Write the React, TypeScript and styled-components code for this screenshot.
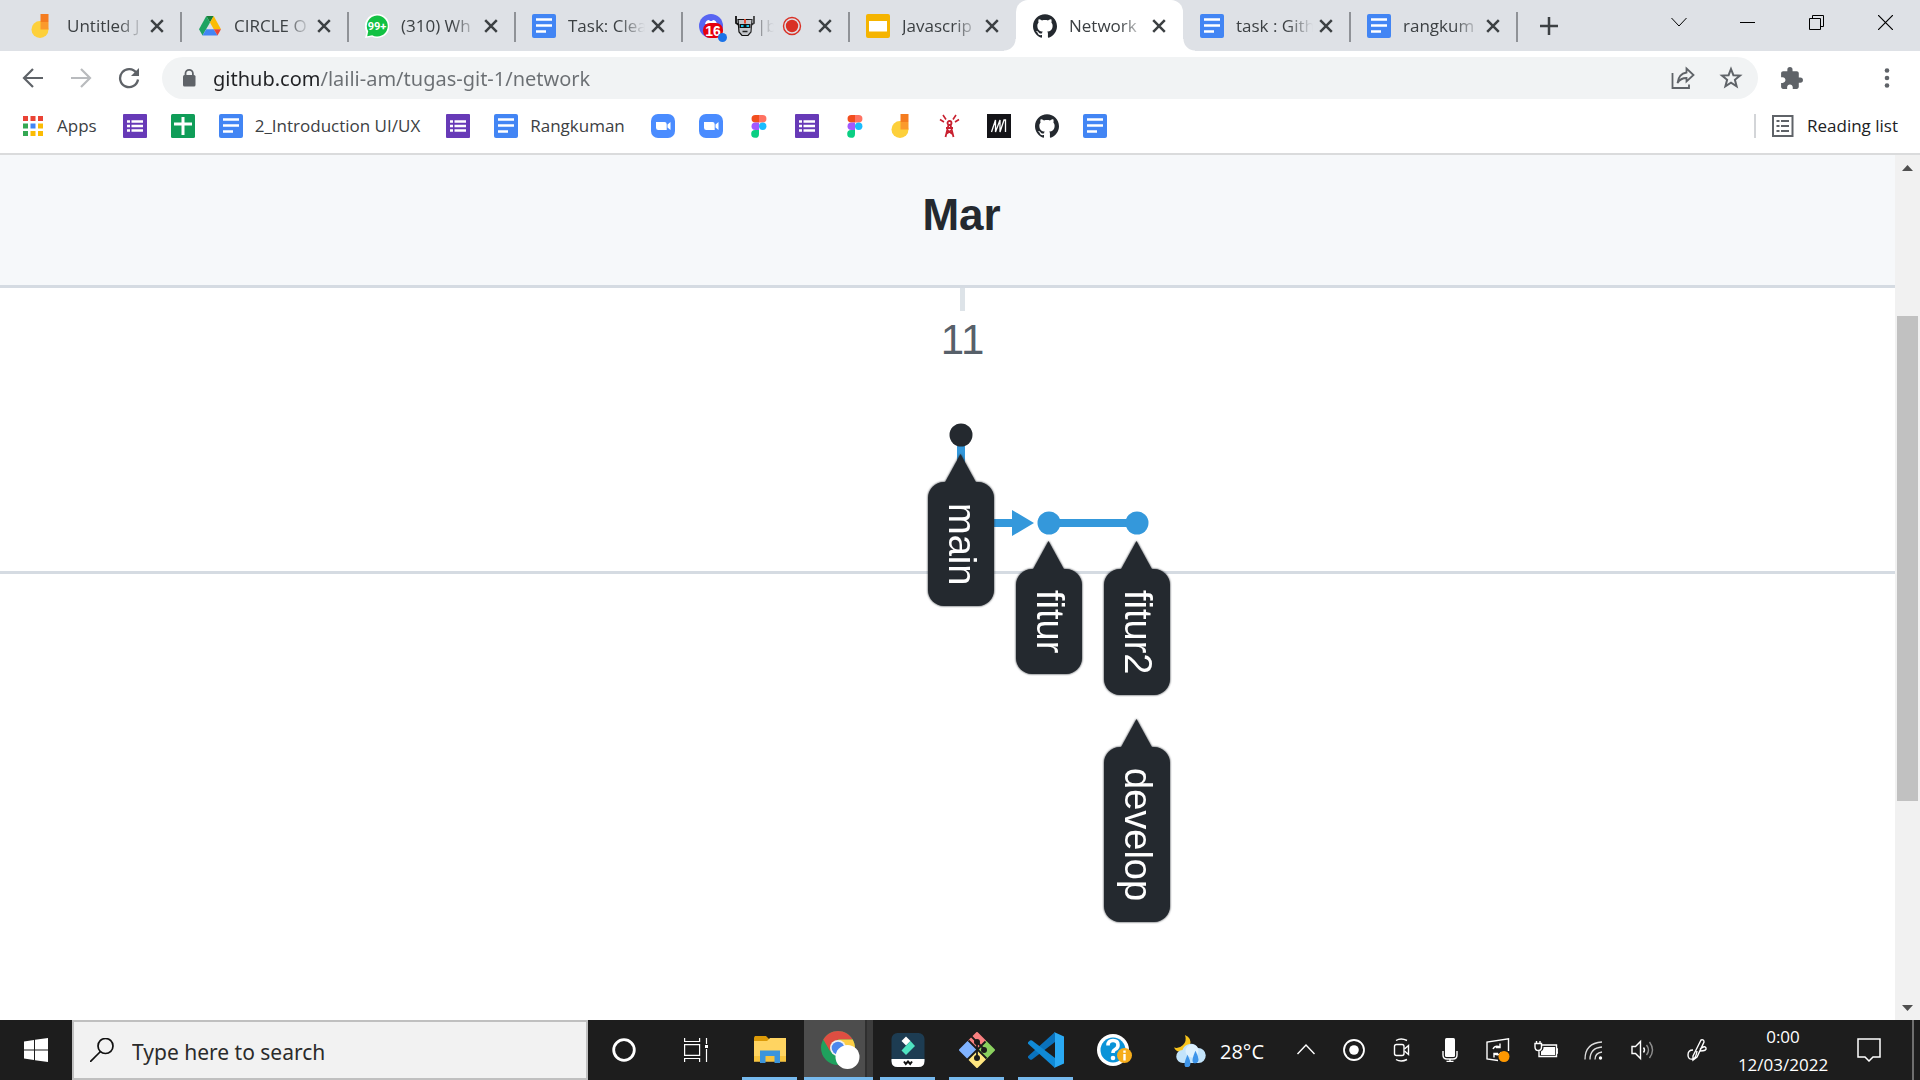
import React from "react";
import styled, { createGlobalStyle, css } from "styled-components";
import { SiGithub } from "react-icons/si";
import { MdExtension } from "react-icons/md";

const Global = createGlobalStyle`
  *, *::before, *::after { box-sizing: border-box; }
  body { margin: 0; background: #fff; font-family: "Open Sans", "Noto Sans", sans-serif; }
  button, input { font: inherit; color: inherit; border: 0; padding: 0; background: none; }
  svg { display: block; flex: none; }
`;

const Screen = styled.div`
  display: flex;
  flex-direction: column;
  height: 100vh;
  overflow: hidden;
`;

/* ---------- Tabs ---------- */

const TabStrip = styled.header`
  display: flex;
  flex: none;
  height: 51px;
  padding-left: 14px;
  background: #dee1e6;
  color: #3c4043;
`;

const Tab = styled.div<{ $active?: boolean; $divider?: boolean }>`
  position: relative;
  display: flex;
  align-items: center;
  flex: 0 1 167px;
  min-width: 0;
  padding: 0 13px 0 17px;
  ${(p) =>
    p.$divider &&
    css`
      &::after {
        content: "";
        position: absolute;
        right: -1px;
        top: 12px;
        width: 2px;
        height: 30px;
        background: #8f9297;
      }
    `}
  ${(p) =>
    p.$active &&
    css`
      background: #fff;
      border-radius: 12px 12px 0 0;
      &::before,
      &::after {
        content: "";
        position: absolute;
        bottom: 0;
        width: 12px;
        height: 12px;
      }
      &::before {
        left: -12px;
        background: radial-gradient(circle at 0 0, transparent 11px, #fff 12px);
      }
      &::after {
        right: -12px;
        background: radial-gradient(circle at 100% 0, transparent 11px, #fff 12px);
      }
    `}
`;

const TabLink = styled.button`
  display: flex;
  align-items: center;
  flex: 1;
  min-width: 0;
  gap: 12px;
  height: 100%;
  text-align: left;
`;

const TabTitle = styled.span`
  display: flex;
  align-items: center;
  flex: 1;
  gap: 2px;
  min-width: 0;
  overflow: hidden;
  white-space: nowrap;
  font-size: 17px;
  line-height: 24px;
  mask-image: linear-gradient(90deg, #000 calc(100% - 28px), transparent calc(100% - 2px));
`;

const MediaBadge = styled.span`
  margin: 0 12px 0 -6px;
`;

const CloseButton = styled.button`
  display: grid;
  place-items: center;
  flex: none;
  width: 22px;
  height: 24px;
`;

const NewTab = styled.button`
  display: grid;
  place-items: center;
  width: 64px;
`;

const WindowButtons = styled.div`
  display: flex;
  margin-left: auto;
  color: #000;
`;

const WindowButton = styled.button`
  display: grid;
  place-items: center;
  width: 69px;
  height: 44px;
`;

/* ---------- Toolbar ---------- */

const Toolbar = styled.div`
  display: flex;
  align-items: center;
  flex: none;
  height: 54px;
  padding: 0 9px;
  color: #5f6368;
`;

const ToolButton = styled.button<{ $faded?: boolean }>`
  display: grid;
  place-items: center;
  flex: none;
  width: 48px;
  height: 42px;
  color: ${(p) => (p.$faded ? "#b9bbbe" : "#5f6368")};
`;

const Omnibox = styled.label`
  display: flex;
  align-items: center;
  flex: 1;
  height: 42px;
  margin: 0 9px;
  padding: 0 3px 0 15px;
  border-radius: 21px;
  background: #f1f3f4;
`;

const Address = styled.input`
  flex: 1;
  min-width: 0;
  height: 42px;
  margin-left: 12px;
  outline: 0;
  font-family: "Noto Sans", "Open Sans", sans-serif;
  font-size: 20px;
  color: #5f6368;
  background: linear-gradient(90deg, #202124 107px, #6b6f73 107px);
  background-clip: text;
  -webkit-text-fill-color: transparent;
`;

const MenuButton = styled(ToolButton)`
  margin-left: 48px;
`;

/* ---------- Bookmarks ---------- */

const BookmarkBar = styled.nav`
  display: flex;
  align-items: center;
  flex: none;
  gap: 24px;
  height: 50px;
  padding: 0 22px 6px 21px;
  border-bottom: 2px solid #dadbdc;
  color: #3c4043;
`;

const Bookmark = styled.a<{ $labelled: boolean }>`
  display: flex;
  align-items: center;
  gap: 12px;
  padding-right: ${(p) => (p.$labelled ? 2 : 0)}px;
  color: inherit;
  text-decoration: none;
  white-space: nowrap;
  font-size: 17px;
  line-height: 24px;
`;

const ReadingList = styled.button`
  display: flex;
  align-items: center;
  gap: 12px;
  height: 24px;
  margin-left: auto;
  padding-left: 15px;
  border-left: 2px solid #d3d5d8;
  color: #202124;
  font-size: 17px;
  line-height: 24px;
`;

/* ---------- Page ---------- */

const Viewport = styled.div`
  display: flex;
  flex: 1;
  min-height: 0;
`;

const NetworkPage = styled.main`
  flex: 1;
  min-width: 0;
  overflow: hidden;
  background: #fff;
  font-family: "Liberation Sans", Arial, sans-serif;
  color: #24292f;
`;

const MonthRow = styled.div`
  height: 133px;
  padding: 34px 0 0 28px;
  border-bottom: 3px solid #d5dbe2;
  background: #f6f8fa;
  text-align: center;
`;

const Month = styled.h1`
  margin: 0;
  font-size: 44px;
  line-height: 52px;
`;

const GraphArea = styled.div`
  position: relative;
`;

const DayRow = styled.div`
  display: flex;
  flex-direction: column;
  align-items: center;
  height: 286px;
  padding-left: 30px;
  border-bottom: 3px solid #d5dbe2;
`;

const Tick = styled.span`
  width: 5px;
  height: 23px;
  background: #dde3e8;
`;

const Day = styled.span`
  margin-top: 3px;
  color: #57606a;
  font-size: 42px;
  line-height: 52px;
`;

const Canvas = styled.div`
  position: absolute;
  left: calc(50% - 20px);
  top: 135px;
`;

const BranchLabel = styled.div`
  position: absolute;
  display: flex;
  flex-direction: column;
  align-items: center;
  filter: drop-shadow(0 0 1px #24292f);
`;

const Pointer = styled.span`
  width: 34px;
  height: 31px;
  background: #24292f;
  clip-path: polygon(50% 0, 100% 100%, 0 100%);
`;

const Pill = styled.span`
  display: grid;
  place-items: center;
  width: 66px;
  margin-top: -3px;
  padding: 21px 0 21px 2px;
  border-radius: 16px;
  background: #24292f;
  color: #fff;
  font-size: 38px;
  line-height: 40px;
  writing-mode: vertical-rl;
`;

/* ---------- Scrollbar ---------- */

const Scrollbar = styled.div`
  display: flex;
  flex-direction: column;
  width: 25px;
  background: #f1f1f1;
`;

const ScrollArrow = styled.button`
  display: grid;
  place-items: center;
  height: 25px;
  color: #505050;
`;

const Track = styled.div`
  display: grid;
  grid-template-rows: 136fr 485fr 194fr;
  flex: 1;
  padding: 0 2px;
`;

const Thumb = styled.div`
  grid-row: 2;
  background: #c1c1c1;
`;

/* ---------- Taskbar ---------- */

const Taskbar = styled.footer`
  display: flex;
  flex: none;
  height: 60px;
  background: #1d1d1d;
  color: #fff;
`;

const SystemButton = styled.button`
  display: grid;
  place-items: center;
  width: 72px;
`;

const SearchBox = styled.label`
  display: flex;
  align-items: center;
  flex: 0 1 516px;
  padding-left: 16px;
  border: 2px solid #c0c0c0;
  background: #f2f2f2;
  color: #111;
`;

const SearchInput = styled.input`
  flex: 1;
  min-width: 0;
  height: 56px;
  margin-left: 18px;
  padding-top: 4px;
  outline: 0;
  font-family: "Noto Sans", "Open Sans", sans-serif;
  font-size: 21px;
  &::placeholder {
    color: #2b2b2b;
    opacity: 1;
  }
`;

const AppList = styled.div`
  display: flex;
  margin-left: 3px;
`;

const AppButton = styled.button<{ $running?: boolean; $active?: boolean }>`
  position: relative;
  display: grid;
  place-items: center;
  width: 69px;
  ${(p) =>
    p.$active &&
    css`
      background: linear-gradient(90deg, #4d4d4d 61px, #2f2f2f 61px 63px, #3c3c3c 63px);
    `}
  ${(p) =>
    p.$running &&
    css`
      &::after {
        content: "";
        position: absolute;
        bottom: 0;
        left: ${p.$active ? 0 : 7}px;
        right: ${p.$active ? 0 : 7}px;
        height: 3px;
        background: #76b9ed;
      }
    `}
`;

const Weather = styled.button`
  display: flex;
  align-items: center;
  gap: 14px;
  margin-left: auto;
  padding: 2px 18px 0 0;
  font-size: 20px;
`;

const TrayButton = styled.button<{ $wide?: boolean }>`
  display: grid;
  place-items: center;
  width: ${(p) => (p.$wide ? 62 : 48)}px;
`;

const Clock = styled.time`
  display: flex;
  flex-direction: column;
  align-items: center;
  width: 110px;
  padding-top: 3px;
  font-size: 17px;
  line-height: 28px;
`;

const ShowDesktop = styled.button`
  width: 8px;
  margin-left: 12px;
  border-left: 2px solid #6e6e6e;
`;

/* ---------- Icons ---------- */

const DocsIcon = () => (
  <svg width="24" height="24" viewBox="0 0 24 24">
    <rect width="24" height="24" rx="2" fill="#4285f4" />
    <path d="M4 5.5h16M4 11.5h16M4 17.5h10" stroke="#fff" strokeWidth="2.4" />
  </svg>
);

const FormsIcon = () => (
  <svg width="24" height="24" viewBox="0 0 24 24">
    <rect width="24" height="24" rx="1" fill="#673ab7" />
    <path d="M4 7.5h3M4 12h3M4 16.5h3M8.5 7.5h11.500M8.500 12h11.500M8.500 16.500h11.500" stroke="#fff" strokeWidth="2.600" />
  </svg>
);

const SheetsIcon = () => (
  <svg width="24" height="24" viewBox="0 0 24 24">
    <rect width="24" height="24" rx="1.500" fill="#0f9d58" />
    <path d="M3 10h18M12 3v18" stroke="#fff" strokeWidth="3" />
  </svg>
);

const SlidesIcon = () => (
  <svg width="24" height="24" viewBox="0 0 24 24">
    <rect width="24" height="24" rx="2" fill="#f5b400" />
    <rect x="3" y="7" width="18" height="10.500" fill="#fff" />
  </svg>
);

const JamboardIcon = () => (
  <svg width="24" height="24" viewBox="0 0 24 24">
    <circle cx="9" cy="15.500" r="8.500" fill="#fdd03b" />
    <path d="M9.500 8h8v7.500h-8z" fill="#fb9a2c" />
    <path d="M9.500 0h8v8h-8z" fill="#f57c1f" />
  </svg>
);

const DriveIcon = () => (
  <svg width="24" height="24" viewBox="0 0 24 24">
    <path d="M8.300 2h7.400L12 8.400z" fill="#188038" />
    <path d="M8.300 2 12 8.400 4.500 21.500 1 15.200z" fill="#1ea362" />
    <path d="M15.700 2 23 15.200h-7.200L12 8.400z" fill="#fbbc04" />
    <path d="M8.200 15.200h7.600l3.700 6.300h-15z" fill="#4285f4" />
    <path d="M15.800 15.200H23l-3.500 6.300z" fill="#ea4335" />
  </svg>
);

const WhatsAppIcon = () => (
  <svg width="24" height="24" viewBox="0 0 24 24">
    <path d="M12 0a12 12 0 1 1-5 22.700L0 24l1.500-6A12 12 0 0 1 12 0z" fill="#fff" />
    <path d="M12 1.500a10.500 10.500 0 1 1-4.800 19.700L2.200 22.300l1-5A10.500 10.500 0 0 1 12 1.500z" fill="#12c143" />
    <text x="12" y="16" textAnchor="middle" fontSize="11" fontWeight="700" fontFamily="Roboto, sans-serif" fill="#fff">
      99+
    </text>
  </svg>
);

const DiscordIcon = () => (
  <svg width="24" height="24" viewBox="0 0 24 24" overflow="visible">
    <circle cx="12" cy="12" r="12" fill="#5865f2" />
    <path d="M6 10q1-4 4-4l1 1h2l1-1q3 0 4 4z" fill="#fff" />
    <rect x="4" y="9" width="20" height="15" rx="7" fill="#e6000d" />
    <text x="14" y="21.500" textAnchor="middle" fontSize="14" fontWeight="700" fontFamily="Liberation Sans, sans-serif" fill="#fff">
      16
    </text>
    <circle cx="23.500" cy="23.500" r="4.500" fill="#1a73e8" />
  </svg>
);

const RobotIcon = () => (
  <svg width="20" height="22" viewBox="0 0 20 22">
    <path d="M1 1v7l3 2M19 1v7l-3 2" fill="none" stroke="#111" strokeWidth="1.800" />
    <path d="M3 4.500h14l-1 12.500-3 3.500H7L4 17z" fill="#c3c6cb" stroke="#111" strokeWidth="1.200" />
    <path d="M9 4h2v4.500H9z" fill="#e8462b" />
    <path d="M4.500 9h11v4h-11z" fill="#111" />
    <path d="M6 10h2.500v2H6zM11.500 10H14v2h-2.500z" fill="#19c8ee" />
    <path d="M7.500 16.500h5" stroke="#222" strokeWidth="1.500" />
  </svg>
);

const RecordIcon = () => (
  <svg width="20" height="20" viewBox="0 0 20 20">
    <circle cx="10" cy="10" r="8.500" fill="none" stroke="#d93025" strokeWidth="1.400" />
    <circle cx="10" cy="10" r="6.200" fill="#d93025" />
  </svg>
);

const GithubIcon = () => <SiGithub size={24} color="#24292f" />;

const CloseIcon = () => (
  <svg width="14" height="14" viewBox="0 0 14 14" stroke="#3c4043" strokeWidth="2.500">
    <path d="m1.200 1.200 11.600 11.600m0-11.600-11.600 11.600" />
  </svg>
);

const AppsIcon = () => (
  <svg width="24" height="24" viewBox="0 0 24 24">
    {["#ea4335", "#ea4335", "#ea4335", "#34a853", "#4285f4", "#fbbc04", "#34a853", "#fbbc04", "#fbbc04"].map((c, i) => (
      <rect key={i} x={2 + (i % 3) * 7.500} y={2 + Math.floor(i / 3) * 7.500} width="5" height="5" fill={c} />
    ))}
  </svg>
);

const ZoomIcon = () => (
  <svg width="24" height="24" viewBox="0 0 24 24">
    <rect width="24" height="24" rx="7" fill="#4a8cff" />
    <path d="M5 8h8.500q2.200 0 2.200 2.200V16H7.200Q5 16 5 13.800zM16.500 10.500 19.500 8v8l-3-2.500z" fill="#fff" />
  </svg>
);

const FigmaIcon = () => (
  <svg width="24" height="24" viewBox="0 0 24 24">
    <path d="M12 1H8.300a3.700 3.700 0 0 0 0 7.500H12z" fill="#f24e1e" />
    <path d="M12 1h3.700a3.700 3.700 0 0 1 0 7.500H12z" fill="#ff7262" />
    <path d="M12 8.500H8.300a3.700 3.700 0 0 0 0 7.500H12z" fill="#a259ff" />
    <circle cx="15.700" cy="12.300" r="3.700" fill="#1abcfe" />
    <path d="M12 16H8.300a3.900 3.900 0 1 0 3.700 3.900z" fill="#0acf83" />
  </svg>
);

const TowerIcon = () => (
  <svg width="24" height="24" viewBox="0 0 24 24" fill="none" stroke="#c8202f">
    <path d="M9.500 11 6.500 23M11.500 11l3 12M8 16l5.500 4M13 16l-6 4M7 14h7" strokeWidth="1.800" />
    <circle cx="10.500" cy="9" r="2" strokeWidth="1.800" />
    <path d="M7 5.500 4 1M14 5.500 17 1M5 8 1 5.500M16 8l4-2.500" strokeWidth="1.600" />
  </svg>
);

const MIcon = () => (
  <svg width="24" height="24" viewBox="0 0 24 24">
    <path d="M0 0h24v24H0z" fill="#141418" />
    <path d="M4.500 18 8.500 6v12l4.500-12v12L17 6h1.500v12" fill="none" stroke="#fff" strokeWidth="1.300" />
  </svg>
);

const BackIcon = ({ flip = false }: { flip?: boolean }) => (
  <svg width="22" height="22" viewBox="0 0 22 22" fill="none" stroke="currentColor" strokeWidth="2.200">
    <path d={flip ? "M1 11h18.500M11 2l9 9-9 9" : "M21 11H2.500M11 2l-9 9 9 9"} />
  </svg>
);

const ReloadIcon = () => (
  <svg width="22" height="22" viewBox="0 0 22 22">
    <path d="M18.500 6A9 9 0 1 0 20 12.500" fill="none" stroke="currentColor" strokeWidth="2.300" />
    <path d="M21 1v8h-8z" fill="currentColor" />
  </svg>
);

const LockIcon = () => (
  <svg width="24" height="24" viewBox="0 0 24 24">
    <rect x="6" y="9" width="12.500" height="11.500" rx="1.500" fill="#5f6368" />
    <path d="M8.500 10V7.500a3.700 3.700 0 0 1 7.400 0V10" fill="none" stroke="#5f6368" strokeWidth="1.800" />
  </svg>
);

const ShareIcon = () => (
  <svg width="24" height="24" viewBox="0 0 24 24" fill="none" stroke="currentColor" strokeWidth="1.800">
    <path d="M1.500 7v15H18v-3.500" />
    <path d="M15.500 2.500 22.500 9l-7 6.500V12q-6 0-9 5 1-9 9-10.500z" />
  </svg>
);

const StarIcon = () => (
  <svg width="24" height="24" viewBox="0 0 24 24" fill="none" stroke="currentColor" strokeWidth="2">
    <path d="m12 3 2.400 6.200 6.600.4-5.100 4.200 1.700 6.500L12 16.700l-5.600 3.600 1.700-6.500L3 9.600l6.600-.4z" />
  </svg>
);

const KebabIcon = () => (
  <svg width="6" height="22" viewBox="0 0 6 22" fill="currentColor">
    <circle cx="3" cy="3.500" r="2.300" />
    <circle cx="3" cy="11" r="2.300" />
    <circle cx="3" cy="18.500" r="2.300" />
  </svg>
);

const ReadingIcon = () => (
  <svg width="24" height="24" viewBox="0 0 24 24" fill="none" stroke="#5f6368" strokeWidth="2">
    <rect x="2" y="2" width="19.500" height="20" />
    <path d="M5.500 7h3M5.500 12h3M5.500 17h3M10 7h8M10 12h8M10 17h8" />
  </svg>
);

const WindowsIcon = () => (
  <svg width="24" height="24" viewBox="0 0 24 24" fill="#fff">
    <path d="m0 3.400 10-1.500v9.600H0zM11 1.700 24 0v11.500H11zM0 12.500h10v9.600L0 20.600zM11 12.500h13V24l-13-1.700z" />
  </svg>
);

const SearchIcon = () => (
  <svg width="24" height="24" viewBox="0 0 24 24" fill="none" stroke="#111" strokeWidth="1.700">
    <circle cx="15.500" cy="8" r="7.500" />
    <path d="M10.500 13.500 0 24" />
  </svg>
);

const CortanaIcon = () => (
  <svg width="24" height="24" viewBox="0 0 24 24">
    <circle cx="12" cy="12" r="10.300" fill="none" stroke="#fff" strokeWidth="2.800" />
  </svg>
);

const TaskViewIcon = () => (
  <svg width="24" height="24" viewBox="0 0 24 24" fill="none" stroke="#fff" strokeWidth="1.200">
    <path d="M.6 0v3.500h15V0M.6 24v-3.500h15V24M.6 6.600h15v10.800H.6zM22.500 0v6M22.500 11v13" />
    <path d="M21 7h3v3h-3z" fill="#fff" stroke="none" />
  </svg>
);

const ExplorerIcon = () => (
  <svg width="32" height="28" viewBox="0 0 32 28">
    <path d="M0 1.500 1 0h11l3 3v4H0z" fill="#dc9a08" />
    <path d="M0 5h13l3-3h16v23.500H0z" fill="#ffd461" />
    <path d="M0 20h32v5.500H0z" fill="#f8c43c" />
    <path d="M6 27V14.500h20V27h-5.500v-7h-9v7z" fill="#3c95db" />
  </svg>
);

const ChromeIcon = () => (
  <svg width="42" height="42" viewBox="0 0 42 42">
    <circle cx="20" cy="19" r="17" fill="#1fa15d" />
    <path d="M5.300 10.500A17 17 0 0 1 34.700 10.500H20L12 22z" fill="#de4e42" />
    <path d="M34.700 10.500A17 17 0 0 1 20 36l8-17-8-8.500z" fill="#fdcd45" />
    <circle cx="20" cy="19" r="8" fill="#f1f1f1" />
    <circle cx="20" cy="19" r="6.300" fill="#4c87ee" />
    <circle cx="29.500" cy="28" r="12" fill="#fff" />
  </svg>
);

const FilmoraIcon = () => (
  <svg width="34" height="34" viewBox="0 0 34 34">
    <rect x=".5" width="33" height="34" rx="6" fill="#1d3c52" />
    <path d="M.5 26h33v2q0 6-6 6h-21q-6 0-6-6z" fill="#fff" />
    <path d="m15 3.500 4.500 4.500-4.500 4.500L10.500 8z" fill="#fff" />
    <path d="m19.500 8 4.500 5-9 9-4.500-4.500z" fill="#4fe3c1" />
    <path d="m13 28.500 1.800 2.500 2.200-2.500 2.200 2.500 1.800-2.500" fill="none" stroke="#111" strokeWidth="2" />
  </svg>
);

const GitIcon = () => (
  <svg width="36" height="36" viewBox="0 0 36 36">
    <g strokeLinejoin="round" strokeWidth="2">
      <path d="m18 1 8 8-8 8-8-8z" fill="#f98080" stroke="#f98080" />
      <path d="m9 10 8 8-8 8-8-8z" fill="#80b3ff" stroke="#80b3ff" />
      <path d="m27 10 8 8-8 8-8-8z" fill="#8bd15f" stroke="#8bd15f" />
      <path d="m18 19 8 8-8 8-8-8z" fill="#ffe680" stroke="#ffe680" />
    </g>
    <path d="M9 18 18 9l9 9-9 9z" fill="none" stroke="#1b1b1b" strokeWidth="1.200" transform="translate(0 0) scale(0)" />
    <path d="M12 4l6 6v16M18 10l7 7M9.500 8.500 27.500 26.500M26.500 9.500 8.500 27.500" fill="none" stroke="#1b1b1b" strokeWidth="1.800" />
    <circle cx="18" cy="10" r="3" fill="#1b1b1b" />
    <circle cx="25" cy="18" r="3" fill="#1b1b1b" />
    <circle cx="18" cy="26" r="3" fill="#1b1b1b" />
  </svg>
);

const VSCodeIcon = () => (
  <svg width="36" height="36" viewBox="0 0 36 36">
    <path d="M27 0v10L4 27.500q-1 .7-2 0l-1.700-1.600q-1-1 0-2z" fill="#0a72bd" />
    <path d="M27 36V26L4 8.500q-1-.7-2 0L.3 10q-1 1 0 2z" fill="#108ad6" />
    <path d="M26 0 36 4.500v27L26 36q1-.5 1-2V2q0-1.500-1-2z" fill="#2aa9f3" />
  </svg>
);

const HelpIcon = () => (
  <svg width="36" height="34" viewBox="0 0 36 34">
    <circle cx="16" cy="17" r="16" fill="#fff" />
    <circle cx="16" cy="17" r="12.500" fill="#0a93d8" />
    <path d="M11 12.500q0-5 5-5t5 4.500q0 3-3 4.500-2 1-2 3.500" fill="none" stroke="#fff" strokeWidth="3.600" />
    <circle cx="16" cy="25" r="2.300" fill="#fff" />
    <circle cx="27.500" cy="22.500" r="7.500" fill="#f6ad1b" />
    <path d="M27.500 17.500v2.200M27.500 21v6.500" stroke="#fff" strokeWidth="2.400" />
  </svg>
);

const WeatherIcon = () => (
  <svg width="32" height="32" viewBox="0 0 32 32">
    <path d="M11 0q7 3 5 10t-8 7Q2 17 0 12.500 5 14 9 10t2-10z" fill="#f9c51c" />
    <path d="M9 28a6.500 6.500 0 0 1-.5-13 8.500 8.500 0 0 1 15.500-2 7.500 7.500 0 0 1 .5 15z" fill="#c3e4fb" />
    <circle cx="18" cy="16" r="6.500" fill="#def1fd" />
    <path d="M13.500 21.500q4.500 9 0 10t0-10zM21.500 17.500q4.500 9 0 10t0-10z" fill="#3e95ea" stroke="#3e95ea" strokeWidth="1.500" />
  </svg>
);

const Stroke = ({ children }: { children: React.ReactNode }) => (
  <svg width="24" height="24" viewBox="0 0 24 24" fill="none" stroke="#fff" strokeWidth="1.400">
    {children}
  </svg>
);

/* ---------- Data ---------- */

type TabInfo = { title: React.ReactNode; label: string; icon: React.ReactNode; active?: boolean; divider?: boolean; extra?: React.ReactNode };

const tabs: TabInfo[] = [
  { title: "Untitled J", label: "Untitled", icon: <JamboardIcon />, divider: true },
  { title: "CIRCLE O", label: "CIRCLE", icon: <DriveIcon />, divider: true },
  { title: "(310) Wh", label: "(310)", icon: <WhatsAppIcon />, divider: true },
  { title: "Task: Clea", label: "Task", icon: <DocsIcon />, divider: true },
  {
    title: (
      <>
        <RobotIcon />|b
      </>
    ),
    label: "Call",
    icon: <DiscordIcon />,
    divider: true,
    extra: (
      <MediaBadge>
        <RecordIcon />
      </MediaBadge>
    ),
  },
  { title: "Javascrip", label: "Javascript", icon: <SlidesIcon /> },
  { title: "Network", label: "Network", icon: <GithubIcon />, active: true },
  { title: "task : Gith", label: "task", icon: <DocsIcon />, divider: true },
  { title: "rangkum", label: "rangkuman", icon: <DocsIcon />, divider: true },
];

const bookmarks: { name: string; text?: string; icon: React.ReactNode }[] = [
  { name: "Apps", text: "Apps", icon: <AppsIcon /> },
  { name: "Forms", icon: <FormsIcon /> },
  { name: "Sheets", icon: <SheetsIcon /> },
  { name: "Introduction", text: "2_Introduction UI/UX", icon: <DocsIcon /> },
  { name: "Forms", icon: <FormsIcon /> },
  { name: "Rangkuman", text: "Rangkuman", icon: <DocsIcon /> },
  { name: "Zoom", icon: <ZoomIcon /> },
  { name: "Zoom", icon: <ZoomIcon /> },
  { name: "Figma", icon: <FigmaIcon /> },
  { name: "Forms", icon: <FormsIcon /> },
  { name: "Figma", icon: <FigmaIcon /> },
  { name: "Jamboard", icon: <JamboardIcon /> },
  { name: "Tower", icon: <TowerIcon /> },
  { name: "M", icon: <MIcon /> },
  { name: "GitHub", icon: <GithubIcon /> },
  { name: "Docs", icon: <DocsIcon /> },
];

const branches = [
  { name: "main", x: 0, y: 31 },
  { name: "fitur", x: 88, y: 118 },
  { name: "fitur2", x: 176, y: 118 },
  { name: "develop", x: 176, y: 296 },
];

const apps: { name: string; icon: React.ReactNode; running?: boolean; active?: boolean }[] = [
  { name: "File Explorer", icon: <ExplorerIcon />, running: true },
  { name: "Chrome", icon: <ChromeIcon />, running: true, active: true },
  { name: "Filmora", icon: <FilmoraIcon />, running: true },
  { name: "Git Bash", icon: <GitIcon />, running: true },
  { name: "Visual Studio Code", icon: <VSCodeIcon />, running: true },
  { name: "Help", icon: <HelpIcon /> },
];

const tray: { name: string; icon: React.ReactNode }[] = [
  { name: "Show hidden icons", icon: <Stroke><path d="m3.500 16 8.500-9 8.500 9" /></Stroke> },
  {
    name: "Record",
    icon: (
      <Stroke>
        <circle cx="12" cy="12" r="10" strokeWidth="1.800" />
        <circle cx="12" cy="12" r="4.800" fill="#fff" stroke="none" />
      </Stroke>
    ),
  },
  {
    name: "Meet now",
    icon: <Stroke><rect x="4.500" y="6.500" width="9.500" height="11" rx="2" /><path d="m14.500 11 4-3.500v9l-4-3.500M6 2.500q5-3 11 0M6 21.500q5 3 11 0" /></Stroke>,
  },
  {
    name: "Microphone",
    icon: <Stroke><rect x="7" y="0" width="10" height="19" rx="1.500" fill="#fff" stroke="none" /><path d="M5 13v4q0 4 4 4h6q4 0 4-4v-4M12 21v3M8.500 23.500h7" /></Stroke>,
  },
  {
    name: "Update",
    icon: (
      <Stroke>
        <path d="M22.500 13V.8L1 4v17l11 1.500" />
        <path d="M7 11q2-4 7-2M14 5.500V9.500h-4M15.500 14q-2 4-7 2M8 19.500v-4h4" />
        <circle cx="18" cy="18.500" r="5.500" fill="#ff9800" stroke="none" />
      </Stroke>
    ),
  },
  {
    name: "Battery",
    icon: <Stroke><path d="M8 7h14.500v11.500H5V13M23 11h1v4h-1M1 5.500h6.500V9q0 3.500-3.200 3.500T1 9zM2.500 5.500V3M6 5.500V3" /><path d="M9.500 9H21v8H7v-3.500q2.500-1 2.500-3.500z" fill="#fff" stroke="none" /></Stroke>,
  },
  {
    name: "Wi-Fi",
    icon: <Stroke><path d="M3 21.500Q3 5 20 4M8 21.500Q8 10 20 9M13 21.500Q13 15 20 14" strokeWidth="1.300" opacity=".85" /><circle cx="18.500" cy="20" r="1.700" fill="#fff" stroke="none" /></Stroke>,
  },
  {
    name: "Volume",
    icon: <Stroke><path d="M2 8.500h3.500l5-5v17l-5-5H2z" /><path d="M13.500 9.500q2 2.500 0 5" /><path d="M16.500 7q4 5 0 10M19.500 4q6 8 0 16" opacity=".5" /></Stroke>,
  },
];

export default function App() {
  return (
    <Screen>
      <Global />
      <TabStrip>
        {tabs.map((t) => (
          <Tab key={t.label} $active={t.active} $divider={t.divider}>
            <TabLink>
              {t.icon}
              <TabTitle>{t.title}</TabTitle>
              {t.extra}
            </TabLink>
            <CloseButton aria-label={`Close ${t.label}`}>
              <CloseIcon />
            </CloseButton>
          </Tab>
        ))}
        <NewTab aria-label="New tab">
          <svg width="18" height="18" viewBox="0 0 18 18" stroke="#3c4043" strokeWidth="2.500">
            <path d="M9 0v18M0 9h18" />
          </svg>
        </NewTab>
        <WindowButtons>
          <WindowButton aria-label="Search tabs">
            <svg width="16" height="16" viewBox="0 0 16 16" fill="none" stroke="currentColor">
              <path d="m.5 4 7.500 8 7.500-8" />
            </svg>
          </WindowButton>
          <WindowButton aria-label="Minimize">
            <svg width="15" height="15" viewBox="0 0 15 15" stroke="currentColor">
              <path d="M0 7.500h15" />
            </svg>
          </WindowButton>
          <WindowButton aria-label="Restore">
            <svg width="15" height="15" viewBox="0 0 15 15" fill="none" stroke="currentColor">
              <path d="M.5 3.500h11v11H.5zM3.500 3.500v-3h11v11h-3" />
            </svg>
          </WindowButton>
          <WindowButton aria-label="Close window">
            <svg width="15" height="15" viewBox="0 0 15 15" stroke="currentColor" strokeWidth="1.200">
              <path d="m0 0 15 15M15 0 0 15" />
            </svg>
          </WindowButton>
        </WindowButtons>
      </TabStrip>

      <Toolbar>
        <ToolButton aria-label="Back"><BackIcon /></ToolButton>
        <ToolButton aria-label="Forward" $faded><BackIcon flip /></ToolButton>
        <ToolButton aria-label="Reload"><ReloadIcon /></ToolButton>
        <Omnibox>
          <LockIcon />
          <Address aria-label="Address" defaultValue="github.com/laili-am/tugas-git-1/network" />
          <ToolButton aria-label="Share"><ShareIcon /></ToolButton>
          <ToolButton aria-label="Bookmark"><StarIcon /></ToolButton>
        </Omnibox>
        <ToolButton aria-label="Extensions"><MdExtension size={25} /></ToolButton>
        <MenuButton aria-label="Menu"><KebabIcon /></MenuButton>
      </Toolbar>

      <BookmarkBar>
        {bookmarks.map((b, i) => (
          <Bookmark key={i} href="#" aria-label={b.name} $labelled={Boolean(b.text)}>
            {b.icon}
            {b.text}
          </Bookmark>
        ))}
        <ReadingList>
          <ReadingIcon />
          Reading list
        </ReadingList>
      </BookmarkBar>

      <Viewport>
        <NetworkPage>
          <MonthRow>
            <Month>Mar</Month>
          </MonthRow>
          <GraphArea>
            <DayRow>
              <Tick />
              <Day>11</Day>
            </DayRow>
            <Canvas>
              <svg width="230" height="120" viewBox="0 0 230 120" fill="#3498db" stroke="none">
                <path d="M29 22h8v38h-8zM60 96h26v8H60zM84 87l22 13-22 13zM121 96h88v8h-88z" />
                <circle cx="121" cy="100" r="11.500" />
                <circle cx="209" cy="100" r="11.500" />
                <circle cx="33" cy="12" r="11.500" fill="#24292f" />
              </svg>
              {branches.map((b) => (
                <BranchLabel key={b.name} style={{ left: b.x, top: b.y }}>
                  <Pointer />
                  <Pill>{b.name}</Pill>
                </BranchLabel>
              ))}
            </Canvas>
          </GraphArea>
        </NetworkPage>
        <Scrollbar>
          <ScrollArrow aria-label="Scroll up">
            <svg width="11" height="6" viewBox="0 0 11 6" fill="currentColor"><path d="M5.500 0 11 6H0z" /></svg>
          </ScrollArrow>
          <Track>
            <Thumb />
          </Track>
          <ScrollArrow aria-label="Scroll down">
            <svg width="11" height="6" viewBox="0 0 11 6" fill="currentColor"><path d="M0 0h11L5.500 6z" /></svg>
          </ScrollArrow>
        </Scrollbar>
      </Viewport>

      <Taskbar>
        <SystemButton aria-label="Start"><WindowsIcon /></SystemButton>
        <SearchBox>
          <SearchIcon />
          <SearchInput aria-label="Search" placeholder="Type here to search" />
        </SearchBox>
        <SystemButton aria-label="Cortana"><CortanaIcon /></SystemButton>
        <SystemButton aria-label="Task view"><TaskViewIcon /></SystemButton>
        <AppList>
          {apps.map((a) => (
            <AppButton key={a.name} aria-label={a.name} $running={a.running} $active={a.active}>
              {a.icon}
            </AppButton>
          ))}
        </AppList>
        <Weather>
          <WeatherIcon />
          28°C
        </Weather>
        {tray.map((t) => (
          <TrayButton key={t.name} aria-label={t.name}>{t.icon}</TrayButton>
        ))}
        <TrayButton $wide aria-label="Pen">
          <Stroke>
            <path d="M8 18 16 2q3-1 3 2l-7 15-4 3zM8 12q-5 0-5 5t5 4q3-1 4-8M15 11q5-4 6-1t-6 3" />
          </Stroke>
        </TrayButton>
        <Clock>
          <span>0:00</span>
          <span>12/03/2022</span>
        </Clock>
        <TrayButton $wide aria-label="Notifications">
          <svg width="24" height="24" viewBox="0 0 24 24" fill="none" stroke="#fff" strokeWidth="1.500">
            <path d="M1 1h22v18h-7l-4 4-4-4H1z" />
          </svg>
        </TrayButton>
        <ShowDesktop aria-label="Show desktop" />
      </Taskbar>
    </Screen>
  );
}
